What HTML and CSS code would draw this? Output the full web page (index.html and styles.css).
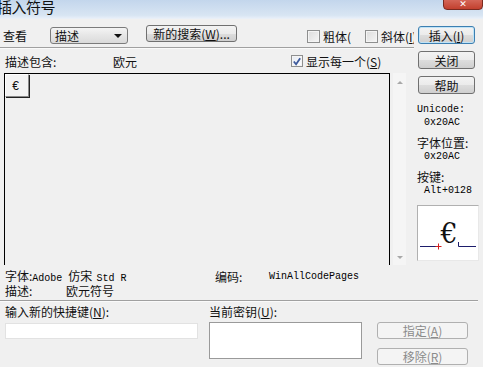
FILE: index.html
```html
<!DOCTYPE html>
<html>
<head>
<meta charset="utf-8">
<link rel="stylesheet" href="styles.css">
</head>
<body>
<div class="dialog">
  <div class="titlebar">
    <span class="title">插入符号</span>
    <span class="close">✕</span>
  </div>
  <div class="top">
    <div class="left">
      <div class="row1">
        <span class="lbl-view">查看</span>
        <div class="select"><span>描述</span><span class="arrow"></span></div>
        <div class="btn btn-search">新的搜索(<u>W</u>)...</div>
        <div class="chk-group g1"><span class="chk"></span><span class="chk-lbl">粗体(</span></div>
        <div class="chk-group g2"><span class="chk"></span><span class="chk-lbl">斜体(<u>I</u>)</span></div>
      </div>
      <div class="sep"></div>
      <div class="row2">
        <span class="lbl-desc">描述包含:</span>
        <span class="lbl-euro">欧元</span>
        <span class="chk checked"><svg width="11" height="11" viewBox="0 0 11 11"><path d="M2 5.5 L4.5 8.5 L9 2" fill="none" stroke="#3d5a9c" stroke-width="2"/></svg></span>
        <span class="chk-lbl">显示每一个(<u>S</u>)</span>
      </div>
      <div class="gridrow">
        <div class="grid">
          <div class="cell">€</div>
        </div>
        <div class="scroll">
          <span class="up"></span>
          <span class="down"></span>
        </div>
      </div>
    </div>
    <div class="right">
      <div class="btn btn-side btn-default">插入(<u>I</u>)</div>
      <div class="btn btn-side">关闭</div>
      <div class="btn btn-side">帮助</div>
      <div class="info-lbl mono first">Unicode:</div>
      <div class="info-val mono">0x20AC</div>
      <div class="info-lbl cjk gap">字体位置:</div>
      <div class="info-val mono">0x20AC</div>
      <div class="info-lbl cjk gap">按键:</div>
      <div class="info-val mono">Alt+0128</div>
      <div class="preview">
        <svg class="pv-lines" width="62" height="56" viewBox="0 0 62 56">
          <path d="M3 41.5 H20" stroke="#1d1d6b" stroke-width="1"/>
          <path d="M18.5 41.5 H24.5 M21.5 38.5 V44.5" stroke="#d02020" stroke-width="1"/>
          <path d="M41.5 37 V41.5 H59" fill="none" stroke="#1d1d6b" stroke-width="1"/>
        </svg>
        <span class="pv-glyph">€</span>
      </div>
    </div>
  </div>
  <div class="info">
    <div class="info-row">
      <span class="c1">字体:<span class="mono">Adobe</span><span class="sp">仿宋</span><span class="mono">Std R</span></span>
      <span class="c2">编码:</span>
      <span class="c3 mono">WinAllCodePages</span>
    </div>
    <div class="info-row">
      <span class="c1b">描述:</span>
      <span>欧元符号</span>
    </div>
  </div>
  <div class="sep sep-full"></div>
  <div class="bottom">
    <div class="col-a">
      <div class="blbl">输入新的快捷键(<u>N</u>):</div>
      <div class="input"></div>
    </div>
    <div class="col-b">
      <div class="blbl">当前密钥(<u>U</u>):</div>
      <div class="list"></div>
    </div>
    <div class="col-c">
      <div class="btn btn-dis">指定(<u>A</u>)</div>
      <div class="btn btn-dis second">移除(<u>R</u>)</div>
    </div>
  </div>
</div>
</body>
</html>
```
FILE: styles.css
```css
* { box-sizing: border-box; }
html, body { margin: 0; padding: 0; }
body {
  width: 483px;
  height: 367px;
  overflow: hidden;
  background: #f0f0f0;
  font-family: "Noto Sans CJK SC", "Noto Sans", sans-serif;
  font-size: 12px;
  color: #111;
}
.dialog { width: 483px; height: 367px; position: relative; }
.mono { font-family: "Liberation Mono", "DejaVu Sans Mono", monospace; font-size: 10px; color: #000; }
u { text-decoration: underline; text-underline-offset: 1px; }

.titlebar {
  height: 19px;
  position: relative;
  background: linear-gradient(#c3d6ec, #d8e5f3 85%, #e6eef8);
  border-bottom: 1px solid #e9eff7;
  overflow: hidden;
}
.title {
  display: block;
  margin-left: -3px;
  margin-top: -3px;
  font-size: 15px;
  line-height: 19px;
  color: #111;
  letter-spacing: -0.5px;
}
.close {
  position: absolute;
  top: -2px;
  right: 0;
  width: 40px;
  height: 12px;
  background: linear-gradient(#d66a5c, #c2402e);
  border: 1px solid #7a2a20;
  border-radius: 0 0 4px 4px;
  color: #fff;
  font-size: 9px;
  line-height: 10px;
  text-align: center;
  font-family: "DejaVu Sans", sans-serif;
  font-weight: bold;
}

.top { display: flex; height: 246px; }
.left { width: 414px; flex: none; overflow: hidden; }
.right { width: 65px; flex: none; margin-left: 4px; }

.row1 {
  display: flex;
  align-items: flex-start;
  height: 28px;
  padding-top: 6px;
  white-space: nowrap;
}
.row1 > * { flex: none; }
.lbl-view { width: 47px; margin-left: 3px; margin-top: 2px; line-height: 17px; }
.select {
  width: 78px; height: 17px; margin-top: 2px;
  border: 1px solid #7b7b7b; border-radius: 3px;
  background: linear-gradient(#f4f4f4, #e6e6e6 50%, #dadada);
  display: flex; align-items: center; justify-content: space-between;
  padding: 0 5px 0 4px; line-height: 15px;
}
.arrow {
  width: 0; height: 0;
  border-left: 4px solid transparent; border-right: 4px solid transparent;
  border-top: 4px solid #111;
}
.btn {
  height: 17px;
  border: 1px solid #707070;
  border-radius: 3px;
  background: linear-gradient(#f3f3f3, #ebebeb 50%, #dddddd 51%, #cfcfcf);
  display: flex; align-items: center; justify-content: center;
  line-height: 15px;
  white-space: nowrap;
}
.btn-search { width: 91px; margin-left: 18px; }
.chk-group { display: flex; align-items: center; margin-top: 4px; height: 15px; }
.g1 { margin-left: 70px; width: 58px; }
.chk {
  width: 13px; height: 13px; flex: none;
  border: 1px solid #8e8f8f;
  background: linear-gradient(135deg, #dcdcdc, #f6f6f6);
  box-shadow: inset 0 0 0 1px #f4f4f4;
  display: inline-flex; align-items: center; justify-content: center;
}
.chk-lbl { margin-left: 3px; line-height: 15px; }

.sep { height: 1px; background: #a0a0a0; border-bottom: 1px solid #fafafa; box-sizing: content-box; }
.sep-full { width: 478px; }

.row2 { display: flex; align-items: center; height: 24px; white-space: nowrap; }
.row2 > * { flex: none; }
.lbl-desc { margin-left: 5px; width: 108px; }
.lbl-euro { width: 178px; }
.checked { width: 12px; height: 12px; background: linear-gradient(135deg, #e4e9f2, #ffffff); }

.gridrow { display: flex; height: 193px; }
.grid {
  flex: none;
  margin-left: 4px; width: 386px; height: 193px;
  border: 1px solid #000;
  background: #f0f0f0;
}
.cell {
  width: 24px; height: 23px;
  border-top: 1px solid #fff; border-left: 1px solid #fff;
  border-right: 1px solid #8a8a8a; border-bottom: 1px solid #8a8a8a;
  box-shadow: 1px 1px 0 #222;
  background: #f3f3f3;
  font-family: "Liberation Sans", sans-serif;
  font-size: 12px;
  display: flex; align-items: center; justify-content: center;
  padding-right: 3px;
}
.scroll {
  flex: none;
  margin-left: 3px; width: 13px; height: 193px;
  background: #f5f5f5;
  display: flex; flex-direction: column; align-items: center; justify-content: space-between;
  padding: 8px 0 7px;
}
.up, .down { width: 0; height: 0; border-left: 3px solid transparent; border-right: 3px solid transparent; }
.up { border-bottom: 3px solid #a8a8a8; }
.down { border-top: 3px solid #a8a8a8; }

.btn-side { width: 57px; height: 18px; margin-top: 7px; }
.btn-default {
  border-color: #3c7fb1;
  box-shadow: inset 0 0 0 1px #bfe3f7;
}
.info-lbl, .info-val { line-height: 13px; white-space: nowrap; }
.info-lbl.first { margin-top: 9px; }
.info-lbl.gap { margin-top: 7px; }
.info-lbl.cjk { font-size: 12px; margin-left: -1px; line-height: 14px; }
.info-val { padding-left: 6px; }
.mono.info-lbl { margin-left: -1px; }
.preview {
  position: relative;
  margin-top: 8px;
  margin-left: -1px;
  width: 62px; height: 56px;
  background: #fff;
  border-top: 1px solid #b0b0b0; border-left: 1px solid #b0b0b0;
  border-right: 1px solid #e8e8e8; border-bottom: 1px solid #e8e8e8;
  display: flex; justify-content: center;
}
.pv-lines { position: absolute; left: -1px; top: -1px; }
.pv-glyph {
  position: relative;
  font-family: "DejaVu Serif", serif;
  font-weight: normal;
  font-size: 27px;
  line-height: 30px;
  margin-top: 13px;
  margin-left: 2px;
  color: #111;
}

.info { padding-top: 5px; height: 35px; }
.info-row { display: flex; align-items: center; height: 14px; line-height: 14px; white-space: nowrap; overflow: visible; }
.info-row > * { flex: none; }
.c1 { margin-left: 5px; width: 210px; }
.sp { margin: 0 4px 0 6px; }
.c2 { width: 54px; }
.c1b { margin-left: 5px; width: 61px; }

.bottom { display: flex; padding-top: 3px; }
.blbl { line-height: 14px; white-space: nowrap; }
.col-a { margin-left: 5px; width: 193px; }
.col-b { margin-left: 11px; width: 153px; }
.col-c { margin-left: 15px; width: 91px; padding-top: 17px; }
.input {
  margin-top: 4px; height: 16px;
  background: #fff;
  border: 1px solid #e2e2e2;
}
.list {
  margin-top: 3px; height: 37px;
  background: #fff;
  border: 1px solid #9a9a9a;
}
.btn-dis {
  width: 91px; height: 17px;
  border-color: #b0b0b0;
  background: #f4f4f4;
  color: #8b8b8b;
}
.btn-dis.second { margin-top: 9px; }
```
